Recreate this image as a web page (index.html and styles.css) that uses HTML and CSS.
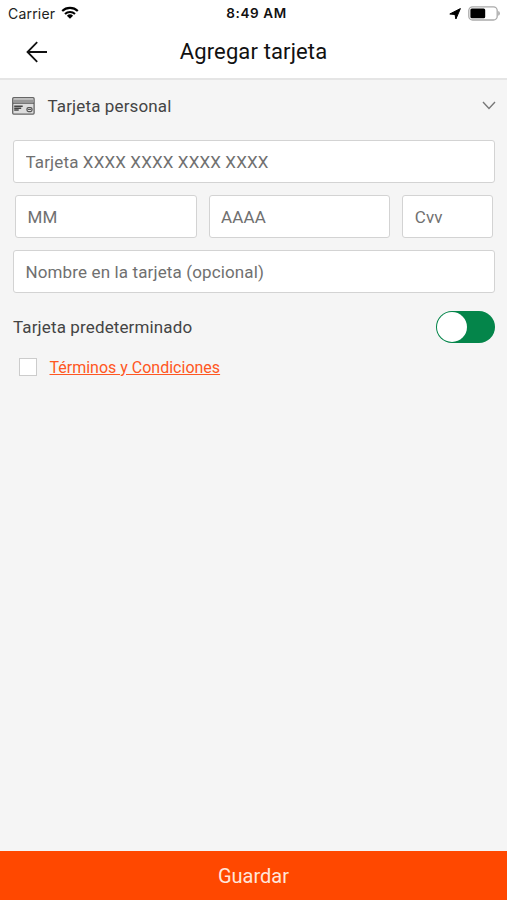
FILE: index.html
```html
<!DOCTYPE html>
<html lang="es">
<head>
<meta charset="utf-8">
<title>Agregar tarjeta</title>
<link rel="stylesheet" href="styles.css">
</head>
<body>
<div class="screen">
  <header class="header">
    <div class="status">
      <div class="status-left">
        <span class="carrier">Carrier</span>
        <svg class="wifi" width="18" height="13" viewBox="0 0 18 13" fill="none" stroke="#000" stroke-width="2.1"><path d="M1.2 5a11.2 11.2 0 0 1 15.6 0M4 8a7.2 7.2 0 0 1 10 0"/><path d="M5.9 9.7a4.5 4.5 0 0 1 6.2 0L9 12.7z" fill="#000" stroke="none"/></svg>
      </div>
      <span class="time">8:49 AM</span>
      <div class="status-right">
        <svg width="12" height="12" viewBox="0 0 12 12"><path d="M11.4.6 6.9 11 6 6.5.8 6z" stroke="#000" stroke-width="1" stroke-linejoin="round"/></svg>
        <svg width="32" height="15" viewBox="0 0 32 15"><rect x=".8" y=".8" width="28.4" height="13.2" rx="3.8" fill="#fff" stroke="#aaa" stroke-width="1.3"/><rect x="2.4" y="2.5" width="14.8" height="9.8" rx="1.5"/><path d="M30.2 5q1.7.5 1.7 2.4t-1.7 2.4z" fill="#aaa"/></svg>
      </div>
    </div>
    <div class="navbar">
      <svg class="back" width="22" height="22" viewBox="0 0 22 22" fill="none" stroke="#111" stroke-width="1.8"><path d="M21 11H1.6M11.2 1.2 1.5 11l9.7 9.8"/></svg>
      <h1 class="title">Agregar tarjeta</h1>
    </div>
  </header>
  <main class="content">
    <div class="type-row">
      <svg width="23" height="18" viewBox="0 0 23 18" fill="none"><rect x=".7" y=".7" width="21.4" height="16.4" rx="1" fill="#ddd" stroke="#666" stroke-width="1.3"/><path d="M1 2.5h21v3H1z" fill="#999"/><path d="M1 6.2h21" stroke="#555" stroke-width="1.1"/><path d="M2.2 9.3h8.5M2.2 11.2h7M2.2 13.1h4.5" stroke="#444" stroke-width="1.5"/><rect x="15" y="10.6" width="5" height="4" rx="1.5" stroke="#555" stroke-width="1.3"/><path d="M16 12.5h3" stroke="#555"/></svg>
      <span class="type-name">Tarjeta personal</span>
      <svg width="14" height="9" viewBox="0 0 14 9" fill="none" stroke="#777" stroke-width="1.4"><path d="M1 1.1 7 7.4 13 1.1"/></svg>
    </div>
    <form class="form">
      <input class="field number" placeholder="Tarjeta XXXX XXXX XXXX XXXX">
      <div class="field-row">
        <input class="field" placeholder="MM">
        <input class="field" placeholder="AAAA">
        <input class="field" placeholder="Cvv">
      </div>
      <input class="field name" placeholder="Nombre en la tarjeta (opcional)">
    </form>
    <div class="default-row">
      <span class="default-label">Tarjeta predeterminado</span>
      <span class="toggle"><span class="knob"></span></span>
    </div>
    <div class="terms">
      <span class="checkbox"></span>
      <a class="link">Términos y Condiciones</a>
    </div>
  </main>
  <button class="save">Guardar</button>
</div>
</body>
</html>
```
FILE: styles.css
```css
* { box-sizing: border-box; }
body { margin: 0; font-family: Roboto, "Liberation Sans", sans-serif; font-size: 17px; letter-spacing: .13px; color: #444; }
svg { display: block; flex: none; }
.screen { height: 900px; display: flex; flex-direction: column; background: #f5f5f5; overflow: hidden; }
.header { height: 80px; flex: none; background: #fff; border-bottom: 2px solid #e5e5e5; }
.status { height: 27px; display: grid; grid-template-columns: 1fr auto 1fr; align-items: center; padding: 0 7px 0 8px; font-family: Inter, sans-serif; color: #111; }
.status-left { display: flex; align-items: center; gap: 6px; }
.carrier { font-size: 14px; line-height: 27px; letter-spacing: .2px; color: #222; }
.wifi { margin-bottom: 2px; }
.time { font-size: 13.5px; font-weight: 600; letter-spacing: .6px; line-height: 27px; padding-left: 5px; }
.status-right { display: flex; justify-content: flex-end; align-items: center; gap: 7px; }
.navbar { height: 50px; display: grid; grid-template-columns: 1fr auto 1fr; align-items: center; }
.navbar::after { content: ""; }
.back { margin-left: 26px; }
.title { margin: 0; font-size: 22px; font-weight: 400; line-height: 50px; color: #111; }
.content { flex: 1; padding: 0 12px 0 13px; }
.type-row { height: 51px; display: flex; align-items: center; }
.type-name { flex: 1; margin-left: 12.5px; }
.type-row svg:first-child { margin-left: -1px; }
.type-row svg:last-child { margin-right: -1px; }
.form { display: flex; flex-direction: column; gap: 12px; padding-top: 9px; }
.field { display: block; width: 100%; min-width: 0; height: 43px; margin: 0; padding: 0 11.5px; border: 1px solid #d3d3d3; border-radius: 3px; background: #fff; font: inherit; letter-spacing: inherit; color: #444; outline: 0; }
.field::placeholder { color: #707070; opacity: 1; }
.field-row { display: grid; grid-template-columns: 2fr 2fr 1fr; gap: 12px; padding: 0 2px; }
.default-row { height: 34px; margin-top: 17px; display: flex; align-items: center; justify-content: space-between; }
.toggle { width: 59px; height: 32px; padding: 1px; border-radius: 16px; background: #04854a; }
.knob { display: block; width: 30px; height: 30px; border-radius: 50%; background: #fff; }
.terms { height: 20px; margin-top: 13px; padding-left: 6px; display: flex; align-items: center; gap: 12px; }
.checkbox { width: 18px; height: 18px; border: 1px solid #ccc; background: #fff; }
.link { font-size: 16px; letter-spacing: 0; padding: 1px 0 0 .5px; color: #ff5722; text-decoration: underline; }
.save { height: 49px; flex: none; border: 0; padding: 0; background: #ff4800; color: #ffe6db; font: 20px Roboto, sans-serif; }
```
